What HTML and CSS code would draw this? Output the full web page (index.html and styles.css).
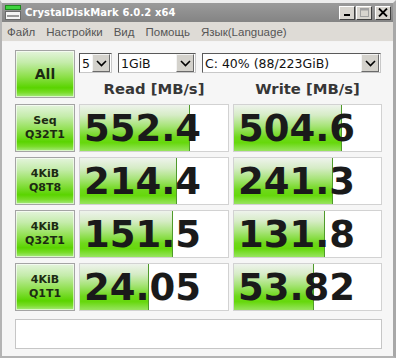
FILE: index.html
```html
<!DOCTYPE html>
<html lang="ru">
<head>
  <meta charset="UTF-8" />
  <title>CrystalDiskMark 6.0.2 x64</title>
  <link rel="stylesheet" href="styles.css">
</head>
<body>
  <div class="window">
    <div class="titlebar">
      <svg class="app-icon" width="16" height="15" viewBox="0 0 16 15">
        <rect x="0.5" y="0.5" width="15" height="4" fill="#3fd33f" stroke="#1c8a1c"/>
        <rect x="0.5" y="6.5" width="15" height="8" fill="#f4f4f4" stroke="#6a6a6a"/>
        <rect x="2" y="10" width="12" height="2" fill="#9a9a9a"/>
      </svg>
      <span class="title">CrystalDiskMark 6.0.2 x64</span>
      <div class="controls">
        <span class="ctl"><svg width="10" height="9" viewBox="0 0 10 9"><rect x="2" y="6" width="6" height="2" fill="#000"/></svg></span>
        <span class="ctl"><svg width="10" height="9" viewBox="0 0 10 9"><rect x="1.5" y="0.5" width="8" height="8" fill="none" stroke="#a0a0a0"/><rect x="1.5" y="0.5" width="8" height="2" fill="#a0a0a0"/></svg></span>
        <span class="ctl close"><svg width="10" height="9" viewBox="0 0 10 9"><path d="M1 0.5 L9 8.5 M9 0.5 L1 8.5" stroke="#000" stroke-width="1.8"/></svg></span>
      </div>
    </div>
    <div class="menubar">
      <span>Файл</span>
      <span>Настройки</span>
      <span>Вид</span>
      <span>Помощь</span>
      <span>Язык(Language)</span>
    </div>
    <div class="content">
      <div class="grid">
        <button class="btn all">All</button>
        <div class="top">
          <div class="selects">
            <div class="select sel-count"><span>5</span><i class="arrow"><svg width="11" height="7" viewBox="0 0 11 7"><path d="M1 1 L5.5 5.5 L10 1" fill="none" stroke="#000" stroke-width="1.6"/></svg></i></div>
            <div class="select sel-size"><span>1GiB</span><i class="arrow"><svg width="11" height="7" viewBox="0 0 11 7"><path d="M1 1 L5.5 5.5 L10 1" fill="none" stroke="#000" stroke-width="1.6"/></svg></i></div>
            <div class="select sel-drive"><span>C: 40% (88/223GiB)</span><i class="arrow"><svg width="11" height="7" viewBox="0 0 11 7"><path d="M1 1 L5.5 5.5 L10 1" fill="none" stroke="#000" stroke-width="1.6"/></svg></i></div>
          </div>
          <div class="heads">
            <div>Read [MB/s]</div>
            <div>Write [MB/s]</div>
          </div>
        </div>

        <button class="btn label">Seq<br>Q32T1</button>
        <div class="meter"><div class="bar" style="width:73.5%"></div><span>552.4</span></div>
        <div class="meter"><div class="bar" style="width:73%"></div><span>504.6</span></div>

        <button class="btn label">4KiB<br>Q8T8</button>
        <div class="meter"><div class="bar" style="width:65%"></div><span>214.4</span></div>
        <div class="meter"><div class="bar" style="width:67%"></div><span>241.3</span></div>

        <button class="btn label">4KiB<br>Q32T1</button>
        <div class="meter"><div class="bar" style="width:62%"></div><span>151.5</span></div>
        <div class="meter"><div class="bar" style="width:61%"></div><span>131.8</span></div>

        <button class="btn label">4KiB<br>Q1T1</button>
        <div class="meter"><div class="bar" style="width:46%"></div><span>24.05</span></div>
        <div class="meter"><div class="bar" style="width:53.5%"></div><span>53.82</span></div>
      </div>
      <div class="comment"></div>
    </div>
  </div>
</body>
</html>
```

FILE: styles.css
```css
body {
  margin: 0;
  background: #ffffff;
  font-family: 'DejaVu Sans', sans-serif;
}

.window {
  width: 391px;
  height: 353px;
  border-top: 3px solid #ececec;
  border-left: 2px solid #b4b4b4;
  border-right: 3px solid #a8a8a8;
  border-bottom: 2px solid #b4b4b4;
  display: flex;
  flex-direction: column;
  background: #f6f6f6;
}

.titlebar {
  height: 19px;
  display: flex;
  align-items: center;
  padding-left: 3px;
  background: linear-gradient(to bottom, #9a9a9a, #848484);
}

.app-icon {
  margin-right: 4px;
}

.title {
  color: #ffffff;
  font-weight: bold;
  font-size: 10px;
  letter-spacing: 0.1px;
}

.controls {
  margin-left: auto;
  margin-right: 2px;
  display: flex;
  gap: 1px;
}

.ctl {
  width: 14px;
  height: 12px;
  display: flex;
  align-items: center;
  justify-content: center;
  background: #d8d5cf;
  border: 1px solid;
  border-color: #ffffff #404040 #404040 #ffffff;
}

.ctl.close {
  margin-left: 2px;
}

.menubar {
  height: 19px;
  display: flex;
  align-items: center;
  background: #dedbd6;
  border-bottom: 1px solid #f4f4f4;
  font-family: 'Liberation Sans', sans-serif;
  font-size: 11.5px;
  color: #555555;
}

.menubar span {
  padding: 0 5.5px;
}

.menubar span:first-child {
  padding-left: 5px;
}

.content {
  padding: 8px 0 0 13px;
}

.grid {
  display: grid;
  grid-template-columns: 60px 150px 149px;
  grid-template-rows: 49px 48px 48px 48px 48px;
  column-gap: 4px;
  row-gap: 5px;
}

.btn {
  margin: 0;
  padding: 0;
  font-family: 'DejaVu Sans', sans-serif;
  font-weight: bold;
  color: #1c2a12;
  border: 1px solid #a4a4a4;
  box-shadow: inset 0 0 0 1px rgba(255, 255, 255, 0.6);
  background: linear-gradient(to bottom, #e4f4dc 0%, #c4ecaa 25%, #8ee04c 55%, #5ad400 80%, #78dc28 90%, #a8ea80 100%);
}

.btn.all {
  height: 48px;
  font-size: 14px;
}

.btn.label {
  font-size: 11px;
  line-height: 14px;
}

.top {
  grid-column: 2 / 4;
  display: flex;
  flex-direction: column;
}

.selects {
  margin-top: 3px;
  display: flex;
  gap: 6px;
}

.select {
  height: 18px;
  display: flex;
  align-items: center;
  background: #ffffff;
  border: 1px solid;
  border-color: #5a5a5a #c8c8c8 #c8c8c8 #5a5a5a;
  font-size: 12.5px;
  color: #111111;
}

.select span {
  padding-left: 2px;
  flex: 1;
}

.arrow {
  width: 16px;
  height: 16px;
  margin-right: 1px;
  display: flex;
  align-items: center;
  justify-content: center;
  background: #d4d2cc;
  border: 1px solid;
  border-color: #f4f4f4 #6a6a6a #6a6a6a #f4f4f4;
}

.sel-count { width: 31px; }
.sel-size { width: 76px; }
.sel-drive { width: 177px; }

.heads {
  margin-top: 5px;
  display: grid;
  grid-template-columns: 150px 149px;
  column-gap: 4px;
  line-height: 22px;
  text-align: center;
  font-weight: bold;
  font-size: 14.8px;
  color: #363636;
}

.meter {
  position: relative;
  background: #ffffff;
  border: 1px solid #d2d2d2;
  display: flex;
  align-items: center;
  overflow: hidden;
}

.bar {
  position: absolute;
  left: 0;
  top: 0;
  bottom: 0;
  border-right: 1px solid #4f9a2a;
  background: linear-gradient(to bottom, #eef3ec 0%, #d6ecc6 22%, #a8e47a 45%, #6ed81a 70%, #66d80c 82%, #98e460 100%);
}

.meter span {
  position: relative;
  padding-left: 4px;
  font-weight: bold;
  font-size: 37px;
  color: #1a1a1a;
}

.comment {
  margin-top: 8px;
  width: 365px;
  height: 28px;
  background: #ffffff;
  border: 1px solid #c6c6c6;
}
```
